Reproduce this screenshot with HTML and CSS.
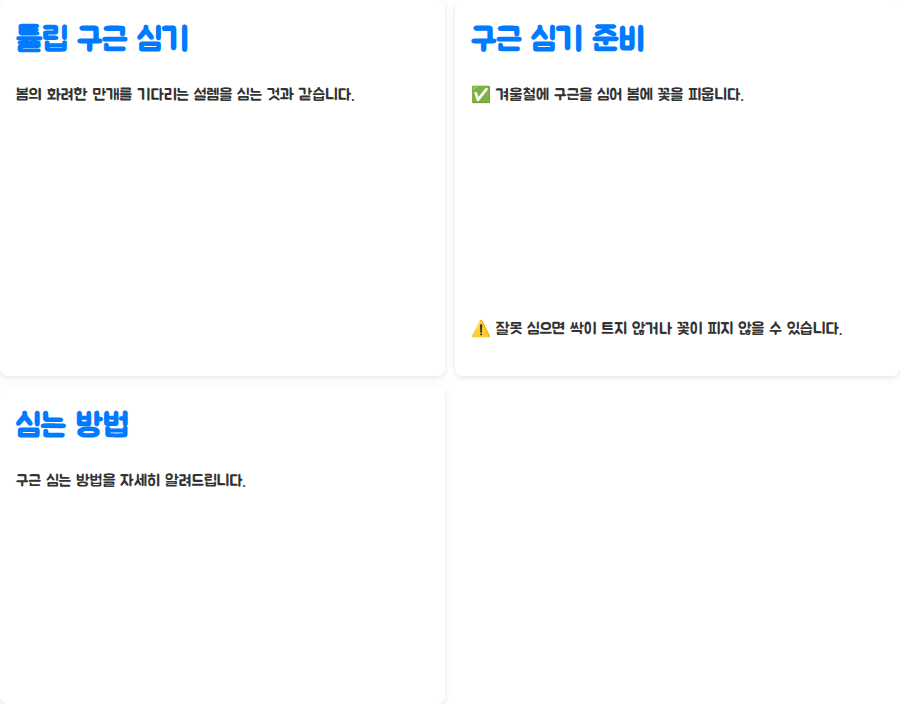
FILE: index.html
```html
<!DOCTYPE html>
<html lang="ko">
<head>
<meta charset="utf-8">
<title>튤립 구근 심기</title>
<link rel="stylesheet" href="styles.css">
</head>
<body>
<main class="grid">
  <section class="card">
    <h2 class="title">튤립 구근 심기</h2>
    <p class="text">봄의 화려한 만개를 기다리는 설렘을 심는 것과 같습니다.</p>
  </section>
  <section class="card card-split">
    <div>
      <h2 class="title">구근 심기 준비</h2>
      <p class="text">✅ 겨울철에 구근을 심어 봄에 꽃을 피웁니다.</p>
    </div>
    <p class="text">⚠️ 잘못 심으면 싹이 트지 않거나 꽃이 피지 않을 수 있습니다.</p>
  </section>
  <section class="card">
    <h2 class="title">심는 방법</h2>
    <p class="text">구근 심는 방법을 자세히 알려드립니다.</p>
  </section>
</main>
</body>
</html>
```
FILE: styles.css
```css
* { box-sizing: border-box; }
html, body { margin: 0; padding: 0; background: #fff; }
body { font-family: "Jua", sans-serif; color: #333; overflow: hidden; }
.grid {
  display: grid;
  grid-template-columns: 445px 445px;
  grid-template-rows: 376px 318px;
  column-gap: 10px;
  row-gap: 10px;
  height: 704px;
}
.card {
  background: #fff;
  border-radius: 8px;
  box-shadow: 0 2px 6px rgba(0,0,0,0.1);
  padding: 16px;
}
.card-split { display: flex; flex-direction: column; justify-content: space-between; }
.title {
  margin: 0 0 19px;
  font-size: 32.2px;
  line-height: 48px;
  font-weight: bold;
  color: #007bff;
}
.text { margin: 0 0 19px; font-size: 16.12px; line-height: 24px; font-weight: normal; }
```
